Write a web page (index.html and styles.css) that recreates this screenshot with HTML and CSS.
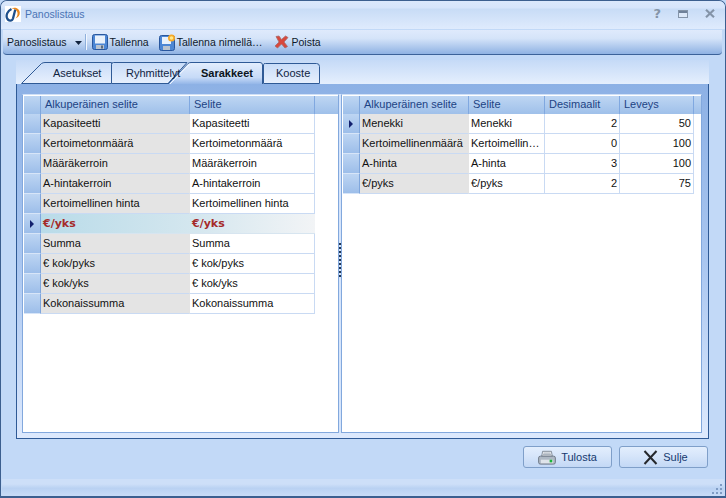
FILE: index.html
```html
<!DOCTYPE html>
<html lang="fi">
<head>
<meta charset="utf-8">
<title>Panoslistaus</title>
<link rel="stylesheet" href="styles.css">
</head>
<body>
<div class="window">
  <header class="titlebar">
    <svg class="logo" width="16" height="16" viewBox="0 0 16 16">
      <rect width="16" height="16" fill="#fff"/>
      <path d="M6.500 3C2.500 5 .8 9 2 12 3.500 15.500 7 15.500 8 12.500L10.300 3.500" fill="none" stroke="#1d4f8c" stroke-width="2.300"/>
      <path d="M6.500 2.500C10 .6 14.500 2.500 14.800 6.500 15 9.500 13 11.500 10.500 12.500 12.300 10.500 13 8 12.300 6 11.300 3.500 9 2.500 6.500 2.500Z" fill="#e8871e"/>
    </svg>
    <span class="title">Panoslistaus</span>
    <div class="winctl">
      <span class="help">?</span>
      <svg width="10" height="8" viewBox="0 0 10 8"><rect x=".5" y=".5" width="9" height="7" fill="#dce8f8" stroke="#8494a8"/><rect x="1" y="1" width="8" height="2" fill="#6f8199"/></svg>
      <svg width="10" height="9" viewBox="0 0 10 9"><path d="M1 .8L9 8.200M9 .8L1 8.200" stroke="#8494a8" stroke-width="2.200"/></svg>
    </div>
  </header>

  <nav class="toolbar">
    <span class="tool menu">Panoslistaus</span>
    <svg class="caret" width="7" height="4" viewBox="0 0 7 4"><path d="M0 0H7L3.500 4Z" fill="#10233f"/></svg>
    <span class="sep"></span>
    <span class="tool">
      <svg width="16" height="16" viewBox="0 0 16 16"><rect x=".5" y=".5" width="15" height="15" rx="2" fill="#4c86d4" stroke="#29579e"/><rect x="3" y="1.500" width="10" height="8" fill="#e9f1fb"/><rect x="4" y="11" width="8" height="4" fill="#b9c3cf"/><rect x="9" y="11.500" width="2" height="3" fill="#5b6b80"/></svg>
      Tallenna
    </span>
    <span class="tool save-as">
      <svg width="17" height="17" viewBox="0 0 17 17"><rect x=".5" y="1.500" width="15" height="15" rx="2" fill="#4c86d4" stroke="#29579e"/><rect x="3" y="3" width="9" height="7" fill="#e9f1fb"/><rect x="4" y="12" width="7" height="4" fill="#b9c3cf"/><circle cx="12.500" cy="4" r="3.500" fill="#f7a928"/><circle cx="12.500" cy="4" r="1.800" fill="#ffe98a"/></svg>
      Tallenna nimellä…
    </span>
    <span class="tool delete">
      <svg width="15" height="14" viewBox="0 0 15 14"><path d="M2 1.500L5 1 7.500 4.500 11.500 1 14 2.500 10 7 13.500 11.500 11 13 7.500 9 3.500 13 1 11 5 7Z" fill="#d8483c" stroke="#a86a6a" stroke-width=".8"/></svg>
      Poista
    </span>
  </nav>

  <main class="content">
    <div class="tabs">
      <svg class="tabshapes" width="304" height="24" viewBox="0 0 304 24">
        <defs>
          <linearGradient id="activetab" x1="0" y1="0" x2="0" y2="1">
            <stop offset="0" stop-color="#e4eefd"/>
            <stop offset=".7" stop-color="#c6daf7"/>
            <stop offset="1" stop-color="#94b6e8"/>
          </linearGradient>
          <linearGradient id="tabfill" x1="0" y1="0" x2="0" y2="1">
            <stop offset="0" stop-color="#c8dcf8"/>
            <stop offset="1" stop-color="#e8f0fd"/>
          </linearGradient>
        </defs>
        <path d="M5.500 23.500L25.500 3.500Q27 2.500 29 2.500H95.500V23.500Z" fill="url(#tabfill)" stroke="#2f5a96"/>
        <path d="M95.500 23.500V4.500Q95.500 2.500 97.500 2.500H171L152 23.500Z" fill="url(#tabfill)" stroke="#2f5a96"/>
        <path d="M152 24L172 3.500Q173 2.500 175 2.500H244Q246.500 2.500 246.500 5V24Z" fill="url(#activetab)"/>
        <path d="M152 24L172 3.500Q173 2.500 175 2.500H244Q246.500 2.500 246.500 5V24" fill="none" stroke="#2f5a96"/>
        <path d="M154 24L173.500 4" fill="none" stroke="#f2f7ff"/>
        <path d="M247.500 23.500V4.500Q247.500 3.500 249.500 3.500H300.500Q303.500 3.500 303.500 6.500V23.500Z" fill="url(#tabfill)" stroke="#2f5a96"/>
      </svg>
      <span class="tab">Asetukset</span>
      <span class="tab">Ryhmittelyt</span>
      <span class="tab active">Sarakkeet</span>
      <span class="tab">Kooste</span>
    </div>

    <section class="panel">
      <div class="grid left">
        <div class="row head"><i></i><b>Alkuperäinen selite</b><b>Selite</b></div>
        <div class="row"><i></i><span>Kapasiteetti</span><span>Kapasiteetti</span></div>
        <div class="row"><i></i><span>Kertoimetonmäärä</span><span>Kertoimetonmäärä</span></div>
        <div class="row"><i></i><span>Määräkerroin</span><span>Määräkerroin</span></div>
        <div class="row"><i></i><span>A-hintakerroin</span><span>A-hintakerroin</span></div>
        <div class="row"><i></i><span>Kertoimellinen hinta</span><span>Kertoimellinen hinta</span></div>
        <div class="row current"><i class="mark"></i><span>€/yks</span><span>€/yks</span></div>
        <div class="row"><i></i><span>Summa</span><span>Summa</span></div>
        <div class="row"><i></i><span>€ kok/pyks</span><span>€ kok/pyks</span></div>
        <div class="row"><i></i><span>€ kok/yks</span><span>€ kok/yks</span></div>
        <div class="row"><i></i><span>Kokonaissumma</span><span>Kokonaissumma</span></div>
      </div>
      <div class="splitter"><span class="dots"></span></div>
      <div class="grid right">
        <div class="row head"><i></i><b>Alkuperäinen selite</b><b>Selite</b><b>Desimaalit</b><b>Leveys</b></div>
        <div class="row"><i class="mark"></i><span>Menekki</span><span>Menekki</span><span class="num">2</span><span class="num">50</span></div>
        <div class="row"><i></i><span>Kertoimellinenmäärä</span><span class="cut">Kertoimellin…</span><span class="num">0</span><span class="num">100</span></div>
        <div class="row"><i></i><span>A-hinta</span><span>A-hinta</span><span class="num">3</span><span class="num">100</span></div>
        <div class="row"><i></i><span>€/pyks</span><span>€/pyks</span><span class="num">2</span><span class="num">75</span></div>
      </div>
    </section>

    <div class="actions">
      <button class="btn">
        <svg width="18" height="15" viewBox="0 0 20 17"><path d="M5 1.500H15L16 7H4Z" fill="#f4f5f7" stroke="#77828f"/><path d="M2.500 7H17.500Q19.500 7 19.500 9V14Q19.500 16 17.500 16H2.500Q.5 16 .5 14V9Q.5 7 2.500 7Z" fill="#aeb8c4" stroke="#66717e"/><rect x="3" y="11" width="14" height="4" fill="#dfe4ea"/><rect x="13" y="11" width="3" height="3" fill="#19b53a"/><path d="M6 3.500H14M5.500 5H14.500" stroke="#9aa4b0"/></svg>
        Tulosta
      </button>
      <button class="btn">
        <svg width="15" height="15" viewBox="0 0 15 15"><path d="M1.500 1L13.500 14M13.500 1L1.500 14" stroke="#26282c" stroke-width="2"/></svg>
        Sulje
      </button>
    </div>
  </main>

  <footer class="statusbar">
    <svg class="grip" width="11" height="11" viewBox="0 0 11 11"><path d="M8 0h2v2H8zM4 4h2v2H4zM8 4h2v2H8zM0 8h2v2H0zM4 8h2v2H4zM8 8h2v2H8z" fill="#7f9cc4"/></svg>
  </footer>
</div>
</body>
</html>
```

FILE: styles.css
```css
* { box-sizing: border-box; }

html, body {
  margin: 0;
  padding: 0;
  background: #c2d9f7;
}

body {
  font-family: "Liberation Sans", Arial, sans-serif;
  font-size: 11px;
  color: #111;
  overflow: hidden;
}

.window {
  width: 726px;
  height: 498px;
  display: flex;
  flex-direction: column;
  border: 1px solid #3c5f8f;
  border-bottom-width: 2px;
  border-radius: 7px 7px 0 0;
  background: #c2d9f7;
  overflow: hidden;
}

.titlebar {
  height: 28px;
  flex: none;
  display: flex;
  align-items: center;
  padding: 0 10px 3px 4px;
  background: linear-gradient(#dbe8fc 0, #d6e5fb 7px, #c8dcf6 8px, #dfebfd 100%);
}

.logo { margin-right: 4px; }

.title {
  font-size: 10.5px;
  color: #4a74b5;
}

.winctl {
  margin-left: auto;
  display: flex;
  align-items: center;
  gap: 17px;
}

.help {
  font: bold 13px "DejaVu Sans", sans-serif;
  color: #8494a8;
}

.toolbar {
  height: 25px;
  flex: none;
  margin: 1px 3px 0 2px;
  padding-left: 4px;
  display: flex;
  align-items: center;
  font-size: 10.5px;
  border-bottom: 1px solid #3b6299;
  border-radius: 0 0 4px 4px;
  background: linear-gradient(#dfeafc, #d5e4f9 35%, #8fb2e3);
}

.tool {
  display: flex;
  align-items: center;
  gap: 2px;
  color: #0f1a2b;
}

.caret { margin: 1px 0 0 8px; }

.sep {
  width: 1px;
  height: 16px;
  margin: 0 5px 0 4px;
  background: #f2f7ff;
  box-shadow: -1px 0 0 #8fb0dc;
}

.save-as { margin-left: 10px; gap: 1px; }
.delete { margin-left: 12px; gap: 2px; }

.content {
  flex: 1;
  display: flex;
  flex-direction: column;
  padding: 5px 16px 0 15px;
}

.tabs {
  position: relative;
  height: 24px;
  flex: none;
  display: grid;
  grid-template-columns: 37px 73px 75px 75px 1fr;
  align-items: center;
  background: linear-gradient(#c5daf7, #e5effd);
}

.tabshapes {
  position: absolute;
  left: 0;
  top: 0;
}

.tab {
  position: relative;
  padding-top: 2px;
  color: #10233f;
  white-space: nowrap;
}

.tab:first-of-type { grid-column: 2; }
.tab.active { font-weight: 700; color: #0b1420; }

.panel {
  height: 356px;
  flex: none;
  display: flex;
  margin-top: -1px;
  padding: 10px 6px 5px 5px;
  border: 1px solid #2f5a96;
  background: linear-gradient(#8db1e5 0, #a9c6f0 50%, #dde9fd 100%);
}

.grid {
  border: 1px solid #82a8dd;
  border-top-color: #cfe0f7;
  padding: 1px 0 0 1px;
  background: #fff;
  flex: none;
}

.grid.left { width: 317px; }
.grid.right { width: 361px; }

.left .row { grid-template-columns: 17px 149px 125px; }
.right .row { grid-template-columns: 17px 109px 76px 75px 74px; }

.row {
  display: grid;
  height: 20px;
  align-items: stretch;
}

.row > span, .row > b {
  display: flex;
  align-items: center;
  padding: 0 2px 1px;
  white-space: nowrap;
  overflow: hidden;
  border-right: 1px solid #c9daf3;
  border-bottom: 1px solid #c9daf3;
  background: #fff;
}

.row > span:nth-child(2) { background: #e4e4e4; border-right-color: #e4e4e4; }

.row > i {
  display: flex;
  align-items: center;
  justify-content: center;
  border-right: 1px solid #7fa6dc;
  border-bottom: 1px solid #d7e5f8;
  background: linear-gradient(#bdd5f3, #9dbee9);
}

.row > i.mark::after {
  content: "";
  border-left: 4px solid #12206e;
  border-top: 4px solid transparent;
  border-bottom: 4px solid transparent;
}

.row.head { height: 18px; background: linear-gradient(#bed6f3, #9fc0ea); grid-template-columns: 17px 149px 125px 24px; }
.right .row.head { grid-template-columns: 17px 109px 76px 75px 74px 9px; }

.row.head > b {
  font-weight: 400;
  padding-left: 4px;
  padding-bottom: 2px;
  color: #1d4384;
  background: transparent;
  border-right: 1px solid #80a8e0;
  border-bottom: none;
}

.row.head > i { border-bottom: none; background: transparent; }

.row.current > span {
  font-family: "DejaVu Sans", sans-serif;
  font-weight: 700;
  color: #a52a2a;
  background: transparent;
  border-right: none;
  border-bottom-color: #d7e5f0;
}

.row.current {
  width: 291px;
  background: linear-gradient(90deg, #b6dae8, #d5e7ef 60%, #f2f4f6);
}

.num { justify-content: flex-end; }

.splitter {
  width: 2px;
  flex: none;
  display: flex;
  align-items: center;
  background: #d5e4fb;
}

.dots {
  width: 2px;
  height: 34px;
  margin-top: -8px;
  background: repeating-linear-gradient(#1d3556 0 2px, transparent 2px 4px);
}

.actions {
  flex: none;
  display: flex;
  justify-content: flex-end;
  gap: 7px;
  padding: 7px 1px 0 0;
}

.btn {
  width: 89px;
  height: 22px;
  display: flex;
  align-items: center;
  justify-content: center;
  gap: 5px;
  padding: 0;
  font: inherit;
  color: #15396f;
  border: 1px solid #7f9fc9;
  border-radius: 3px;
  background: linear-gradient(#e3eefd, #d6e5fa 45%, #c3d8f5);
}

.btn + .btn { padding-left: 4px; }

.statusbar {
  height: 17px;
  flex: none;
  margin: auto 1px 0;
  padding-right: 1px;
  display: flex;
  justify-content: flex-end;
  align-items: flex-end;
  background: linear-gradient(#cddff8, #cddff8 30%, #b9d1f2 55%, #c9dcf7);
}

.grip { margin-bottom: 1px; }
```
